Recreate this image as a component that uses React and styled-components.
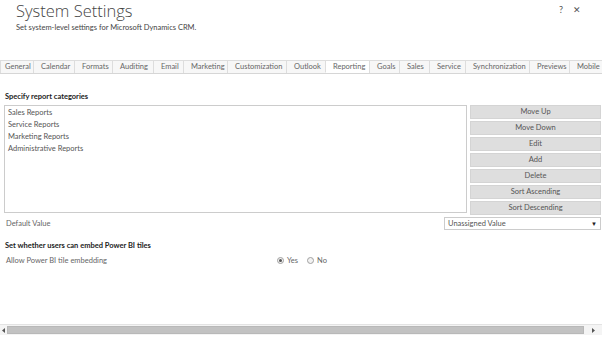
import React from 'react'
import styled, { createGlobalStyle } from 'styled-components'

const GlobalStyle = createGlobalStyle`
  html, body {
    margin: 0;
    padding: 0;
    background: #ffffff;
  }
  body {
    font-family: Lato, 'Open Sans', 'Liberation Sans', sans-serif;
    font-size: 7.5px;
    color: #555555;
  }
`

const Page = styled.div`
  width: 602px;
  height: 338px;
  display: flex;
  flex-direction: column;
  overflow: hidden;
`

const Header = styled.div`
  height: 60px;
  display: flex;
  justify-content: space-between;
  align-items: flex-start;
  padding: 0 16px;
  box-sizing: border-box;
`

const TitleBlock = styled.div`
  display: flex;
  flex-direction: column;
`

const Title = styled.h1`
  margin: 0;
  font-family: 'Open Sans', 'Liberation Sans', sans-serif;
  font-size: 16.5px;
  line-height: 21px;
  font-weight: 300;
  color: #444444;
`

const Subtitle = styled.div`
  margin-top: 2px;
  line-height: 10px;
  color: #444444;
`

const HeaderIcons = styled.div`
  display: flex;
  gap: 10px;
  padding-top: 4px;
  padding-right: 5px;
  font-size: 9px;
  color: #555555;
`

const TabBar = styled.div`
  display: flex;
  height: 13px;
  border-bottom: 1px solid #d6d6d6;
  white-space: nowrap;
  overflow: hidden;
`

const Tab = styled.div`
  flex: none;
  width: ${(props) => props.$width}px;
  box-sizing: border-box;
  padding-left: ${(props) => props.$pad}px;
  overflow: hidden;
  line-height: 12px;
  color: #666666;
  background: ${(props) => (props.$active ? '#ffffff' : '#f7f7f7')};
  border: 1px solid #dddddd;
  border-bottom: ${(props) => (props.$active ? '1px solid #ffffff' : 'none')};
  margin-right: -1px;
`

const Content = styled.div`
  padding: 0 1px 0 4px;
  display: flex;
  flex-direction: column;
`

const SectionTitle = styled.div`
  font-weight: 700;
  color: #222222;
  line-height: 10px;
  margin: ${(props) => props.$margin};
`

const CategoryRow = styled.div`
  display: flex;
  gap: 3px;
`

const ListBox = styled.div`
  flex: 1;
  height: 108px;
  border: 1px solid #cccccc;
  box-sizing: border-box;
  padding: 1px 3px;
`

const ListItem = styled.div`
  line-height: 12px;
  color: #555555;
`

const ButtonColumn = styled.div`
  width: 131px;
  display: flex;
  flex-direction: column;
  gap: 2px;
`

const ActionButton = styled.div`
  height: 14px;
  background: #dedede;
  border: 1px solid #d4d4d4;
  box-sizing: border-box;
  line-height: 12px;
  text-align: center;
  color: #555555;
`

const FieldRow = styled.div`
  display: flex;
  justify-content: space-between;
  align-items: center;
  margin-top: 2px;
  height: 13px;
`

const FieldLabel = styled.div`
  color: #666666;
  padding-left: 2px;
`

const Select = styled.div`
  width: 157px;
  height: 13px;
  border: 1px solid #cccccc;
  box-sizing: border-box;
  display: flex;
  justify-content: space-between;
  align-items: center;
  padding: 0 3px;
  color: #555555;
`

const Caret = styled.span`
  font-size: 6px;
  color: #222222;
`

const RadioRow = styled.div`
  display: flex;
  align-items: center;
  height: 12px;
  margin-top: 3px;
`

const RadioLabelCell = styled.div`
  width: 271px;
  color: #666666;
  padding-left: 2px;
`

const RadioOption = styled.label`
  display: flex;
  align-items: center;
  gap: 3px;
  margin-right: 9px;
  color: #666666;
`

const RadioDot = styled.span`
  width: 5px;
  height: 5px;
  border-radius: 50%;
  border: 1px solid #a0a0a0;
  background: #f2f2f2;
  display: flex;
  align-items: center;
  justify-content: center;

  &::after {
    content: '';
    width: 3px;
    height: 3px;
    border-radius: 50%;
    background: ${(props) => (props.$checked ? '#555555' : 'transparent')};
  }
`

const Spacer = styled.div`
  flex: 1;
`

const ScrollBar = styled.div`
  height: 10px;
  margin-bottom: 3px;
  border-top: 1px solid #e3e3e3;
  background: #f4f4f4;
  display: flex;
  align-items: center;
`

const ScrollArrow = styled.div`
  width: ${(props) => props.$width}px;
  display: flex;
  justify-content: center;
  align-items: center;
`

const ScrollThumb = styled.div`
  flex: 1;
  height: 8px;
  background: #c2c2c2;
  border: 1px solid #b8b8b8;
  box-sizing: border-box;
`

const tabs = [
  { name: 'General', width: 34, pad: 4 },
  { name: 'Calendar', width: 42 },
  { name: 'Formats', width: 39 },
  { name: 'Auditing', width: 42 },
  { name: 'Email', width: 31 },
  { name: 'Marketing', width: 45 },
  { name: 'Customization', width: 60 },
  { name: 'Outlook', width: 40 },
  { name: 'Reporting', width: 45, active: true },
  { name: 'Goals', width: 31 },
  { name: 'Sales', width: 31 },
  { name: 'Service', width: 37 },
  { name: 'Synchronization', width: 65 },
  { name: 'Previews', width: 41 },
  { name: 'Mobile', width: 40 }
]

const categories = [
  'Sales Reports',
  'Service Reports',
  'Marketing Reports',
  'Administrative Reports'
]

const actions = [
  'Move Up',
  'Move Down',
  'Edit',
  'Add',
  'Delete',
  'Sort Ascending',
  'Sort Descending'
]

function App() {
  return (
    <Page>
      <GlobalStyle />
      <Header>
        <TitleBlock>
          <Title>System Settings</Title>
          <Subtitle>Set system-level settings for Microsoft Dynamics CRM.</Subtitle>
        </TitleBlock>
        <HeaderIcons>
          <span>?</span>
          <span>✕</span>
        </HeaderIcons>
      </Header>

      <TabBar>
        {tabs.map((tab) => (
          <Tab
            key={tab.name}
            $width={tab.width}
            $pad={tab.pad || 7}
            $active={tab.active}
          >
            {tab.name}
          </Tab>
        ))}
      </TabBar>

      <Content>
        <SectionTitle $margin="18px 0 3px 1px">Specify report categories</SectionTitle>
        <CategoryRow>
          <ListBox>
            {categories.map((c) => (
              <ListItem key={c}>{c}</ListItem>
            ))}
          </ListBox>
          <ButtonColumn>
            {actions.map((a) => (
              <ActionButton key={a}>{a}</ActionButton>
            ))}
          </ButtonColumn>
        </CategoryRow>

        <FieldRow>
          <FieldLabel>Default Value</FieldLabel>
          <Select>
            <span>Unassigned Value</span>
            <Caret>▼</Caret>
          </Select>
        </FieldRow>

        <SectionTitle $margin="11px 0 0 1px">Set whether users can embed Power BI tiles</SectionTitle>
        <RadioRow>
          <RadioLabelCell>Allow Power BI tile embedding</RadioLabelCell>
          <RadioOption>
            <RadioDot $checked />
            Yes
          </RadioOption>
          <RadioOption>
            <RadioDot />
            No
          </RadioOption>
        </RadioRow>
      </Content>

      <Spacer />

      <ScrollBar>
        <ScrollArrow $width={7}>
          <svg width="4" height="5" viewBox="0 0 4 5">
            <path d="M3 0 L0 2.5 L3 5 Z" fill="#555" />
          </svg>
        </ScrollArrow>
        <ScrollThumb />
        <ScrollArrow $width={18}>
          <svg width="4" height="5" viewBox="0 0 4 5">
            <path d="M1 0 L4 2.5 L1 5 Z" fill="#555" />
          </svg>
        </ScrollArrow>
      </ScrollBar>
    </Page>
  )
}

export default App
